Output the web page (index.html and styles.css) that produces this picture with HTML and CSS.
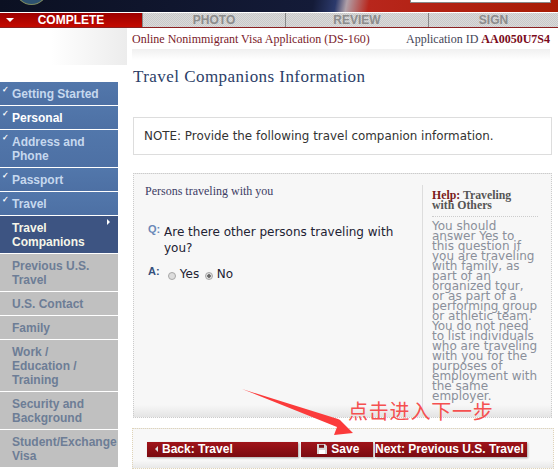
FILE: index.html
```html
<!DOCTYPE html>
<html lang="en">
<head>
    <meta charset="UTF-8">
    <meta name="viewport" content="width=device-width, initial-scale=1.0">
    <title>Travel Companions Information</title>
    <link rel="stylesheet" href="styles.css">
</head>
<body>
    <div class="banner">
        <div class="seal"></div>
        <div class="banner-title">CONSULAR ELECTRONIC APPLICATION CENTER</div>
        <div class="banner-box"></div>
    </div>

    <div class="tabs">
        <div class="tab active"><span class="tab-arrow"></span>COMPLETE</div>
        <div class="tab">PHOTO</div>
        <div class="tab">REVIEW</div>
        <div class="tab last">SIGN</div>
    </div>

    <div class="page">
        <div class="sidebar">
            <div class="sidebar-fade"></div>
            <ul class="nav">
                <li class="nav-item done"><span class="check">&#10003;</span>Getting Started</li>
                <li class="nav-item done white"><span class="check">&#10003;</span>Personal</li>
                <li class="nav-item done"><span class="check">&#10003;</span>Address and<br>Phone</li>
                <li class="nav-item done"><span class="check">&#10003;</span>Passport</li>
                <li class="nav-item done"><span class="check">&#10003;</span>Travel</li>
                <li class="nav-item current">Travel<br>Companions<span class="current-arrow"></span></li>
                <li class="nav-item">Previous U.S.<br>Travel</li>
                <li class="nav-item">U.S. Contact</li>
                <li class="nav-item">Family</li>
                <li class="nav-item">Work /<br>Education /<br>Training</li>
                <li class="nav-item">Security and<br>Background</li>
                <li class="nav-item">Student/Exchange<br>Visa</li>
            </ul>
        </div>

        <div class="main">
            <div class="app-bar">
                <span class="app-name">Online Nonimmigrant Visa Application (DS-160)</span>
                <span class="app-id">Application ID <b>AA0050U7S4</b></span>
            </div>
            <div class="app-fade"></div>

            <h1>Travel Companions Information</h1>

            <div class="note">NOTE: Provide the following travel companion information.</div>

            <div class="panel">
                <div class="question-col">
                    <h3>Persons traveling with you</h3>
                    <div class="qa q-row">
                        <span class="qa-label q">Q:</span>
                        <span>Are there other persons traveling with you?</span>
                    </div>
                    <div class="qa a-row">
                        <span class="qa-label">A:</span>
                        <span class="options">
                            <input type="radio" name="companions"> Yes
                            <input type="radio" name="companions" checked> No
                        </span>
                    </div>
                </div>
                <div class="help">
                    <h4><span class="help-word">Help:</span> Traveling<br>with Others</h4>
                    <p>You should answer Yes to this question if you are traveling with family, as part of an organized tour, or as part of a performing group or athletic team. You do not need to list individuals who are traveling with you for the purposes of employment with the same employer.</p>
                </div>
            </div>

            <div class="buttons">
                <div class="btn back"><span class="back-arrow"></span>Back: Travel</div>
                <div class="btn save">
                    <svg class="disk" viewBox="0 0 10 10" width="10" height="10">
                        <path d="M0 0h8l2 2v8H0z" fill="#d8d8d8"/>
                        <path d="M2 0.8h5v3H2z" fill="#7a1015"/>
                        <path d="M2 6h6v4H2z" fill="#fff"/>
                    </svg>
                    Save
                </div>
                <div class="btn next">Next: Previous U.S. Travel</div>
            </div>
        </div>
    </div>

    <!-- annotation drawn over the screenshot -->
    <svg class="note-arrow" viewBox="0 0 120 60" width="120" height="60">
        <path d="M1 1 L97 31 L99 32 L112 45 L93 47 L96 39 Z" fill="#fb3b3b"/>
    </svg>
    <div class="note-text">点击进入下一步</div>
</body>
</html>
```

FILE: styles.css
```css
html, body {
    height: 474px;
    overflow: hidden;
}

body {
    margin: 0;
    background: #fff;
    font-family: "DejaVu Sans", Verdana, sans-serif;
    color: #222;
    position: relative;
}

.banner {
    height: 12px;
    background: linear-gradient(100deg, #0b1022 0%, #141b38 56%, #2c3a6c 60%, #b0a0a8 62%, #b8261c 66%, #a81c04 100%);
    position: relative;
    overflow: hidden;
    border-bottom: 1px solid #fff;
}

.seal {
    position: absolute;
    left: 16px;
    top: -24px;
    width: 29px;
    height: 27px;
    border-radius: 50%;
    background: #2c5170;
    border: 1px solid #7d8a60;
}

.banner-title {
    position: absolute;
    left: 81px;
    top: -7px;
    font-family: "Liberation Sans", Arial, sans-serif;
    font-size: 7.5px;
    letter-spacing: 0.5px;
    color: #e8e8e8;
    white-space: nowrap;
}

.banner-box {
    position: absolute;
    right: 7px;
    top: -9px;
    width: 139px;
    height: 10px;
    background: #fff;
    border: 1px solid #888;
}

.tabs {
    display: flex;
    height: 14px;
    font-family: "Liberation Sans", Arial, sans-serif;
    font-size: 12px;
    font-weight: bold;
    line-height: 14px;
    text-align: center;
    border-bottom: 1px solid #8a2020;
}

.tab {
    width: 142px;
    background: repeating-conic-gradient(#dadada 0 25%, #c9c9c9 0 50%) 0 0 / 2px 2px;
    color: #8c8c8c;
    border-right: 1px solid #888;
}

.tab.last {
    flex: 1;
    border-right: none;
}

.tab.active {
    position: relative;
    background: linear-gradient(to bottom, #9c0000, #c40a00);
    color: #fff;
}

.tab-arrow {
    position: absolute;
    left: 6px;
    top: 5px;
    border-left: 4px solid transparent;
    border-right: 4px solid transparent;
    border-top: 4px solid #fff;
}

.page {
    display: flex;
}

.sidebar {
    width: 118px;
    margin-right: 15px;
    flex: none;
}

.sidebar-fade {
    height: 37px;
    width: 127px;
    background: linear-gradient(to right, #fff 40%, #ececec);
    margin-bottom: 17px;
}

.nav {
    list-style: none;
    margin: 0;
    padding: 0;
    font-family: "Liberation Sans", Arial, sans-serif;
    font-size: 12px;
    font-weight: bold;
    line-height: 14px;
}

.nav-item {
    position: relative;
    background: #c0c0c0;
    color: #6d7d96;
    padding: 5px 0 4px 12px;
    margin-bottom: 1px;
}

.nav-item.done {
    background: linear-gradient(to bottom, #5277ab, #4d70a4);
    color: #c6d8ee;
}

.nav-item.done.white {
    color: #fff;
}

.nav-item.current {
    background: #3d5482;
    color: #f6f6e8;
}

.check {
    position: absolute;
    left: 2px;
    top: 1px;
    font-size: 8px;
    color: #fff;
}

.current-arrow {
    position: absolute;
    right: 8px;
    top: 3px;
    border-top: 3px solid transparent;
    border-bottom: 3px solid transparent;
    border-left: 3px solid #fff;
}

.main {
    flex: 1;
    min-width: 0;
    padding-right: 4px;
}

.app-bar {
    display: flex;
    justify-content: space-between;
    height: 21px;
    padding-top: 4px;
    box-sizing: border-box;
    margin: 0 4px 0 -1px;
    font-family: "Liberation Serif", "Times New Roman", serif;
    font-size: 12px;
    color: #7a1a2a;
}

.app-id {
    color: #445;
}

.app-id b {
    color: #7a0a1a;
}

.app-fade {
    height: 11px;
    margin: 0 4px 0 -1px;
    background: linear-gradient(to bottom, #f0f0f0, #fff);
}

h1 {
    margin: 7px 0 0;
    font-family: "Liberation Serif", "Times New Roman", serif;
    font-size: 17px;
    font-weight: normal;
    letter-spacing: 0.45px;
    color: #2c4068;
    line-height: 20px;
}

.note {
    margin: 30px 2px 0 0;
    height: 38px;
    box-sizing: border-box;
    border: 1px solid #ddd;
    padding: 11px 10px;
    font-size: 11.9px;
    line-height: 15px;
    color: #333;
}

.panel {
    display: flex;
    margin: 18px 2px 0 0;
    height: 245px;
    box-sizing: border-box;
    border: 1px dotted #ccc;
    background: linear-gradient(to bottom, #f7f7f7 95%, #e4e4e4);
}

.question-col {
    flex: 1;
    padding: 10px 0 0 11px;
}

h3 {
    margin: 0 0 25px;
    font-family: "Liberation Serif", "Times New Roman", serif;
    font-size: 12px;
    font-weight: normal;
    color: #3c3c64;
}

.qa {
    display: flex;
    font-size: 12px;
    line-height: 16px;
    color: #223;
    padding-right: 22px;
}

.q-row {
    margin-bottom: 10px;
}

.qa-label {
    flex: none;
    width: 16px;
    margin: -3px 0 0 3px;
    font-family: "Liberation Sans", Arial, sans-serif;
    font-size: 11px;
    font-weight: bold;
    color: #34507c;
}

.qa-label.q {
    color: #6a88b8;
}

.options input {
    appearance: none;
    margin: 0 0 0 4px;
    width: 8px;
    height: 8px;
    box-sizing: border-box;
    border: 1px solid #a8a8a8;
    border-radius: 50%;
    background: #ddd;
    vertical-align: -2px;
}

.options input:checked {
    margin-left: 2px;
    background: radial-gradient(circle, #666 0 1.5px, #ddd 2px);
}

.help {
    width: 118px;
    flex: none;
    margin: 11px 11px 1px 0;
    padding: 5px 2px 0 9px;
    border-left: 1px solid #ddd;
    box-sizing: border-box;
}

h4 {
    margin: 0;
    padding: 0 0 6px;
    font-family: "Liberation Serif", "Times New Roman", serif;
    font-size: 11.8px;
    line-height: 10px;
    color: #555;
    border-bottom: 1px dotted #ccc;
}

.help-word {
    color: #7a1a1a;
}

.help p {
    margin: 4px 0 0;
    font-size: 12px;
    line-height: 10px;
    color: #8a8f9a;
}

.buttons {
    display: flex;
    margin: 10px 0 0 -1px;
    height: 41px;
    box-sizing: border-box;
    border: 1px dotted #e0d4b8;
    background: linear-gradient(to bottom, #f8f8f8 80%, #e8e8e8);
    padding: 13px 0 0 14px;
}

.btn {
    height: 15px;
    background: linear-gradient(to bottom, #a0141a, #7a0a10);
    box-shadow: 1px 1px 2px #aaa;
    color: #fff;
    font-family: "Liberation Sans", Arial, sans-serif;
    font-size: 12px;
    font-weight: bold;
    line-height: 15px;
}

.back {
    width: 151px;
    margin-right: 3px;
    padding-left: 15px;
    box-sizing: border-box;
    position: relative;
}

.back-arrow {
    position: absolute;
    left: 8px;
    top: 4px;
    border-top: 3px solid transparent;
    border-bottom: 3px solid transparent;
    border-right: 3px solid #ddd;
}

.save {
    width: 72px;
    margin-right: 2px;
    padding-left: 16px;
    box-sizing: border-box;
}

.disk {
    vertical-align: -1px;
    margin-right: 1px;
}

.next {
    width: 152px;
    white-space: nowrap;
}

.note-arrow {
    position: absolute;
    left: 241px;
    top: 388px;
}

.note-text {
    position: absolute;
    left: 348px;
    top: 399px;
    font-family: "Noto Sans CJK SC", sans-serif;
    font-size: 20px;
    letter-spacing: 0.8px;
    line-height: 24px;
    color: #f55050;
    white-space: nowrap;
}
```
